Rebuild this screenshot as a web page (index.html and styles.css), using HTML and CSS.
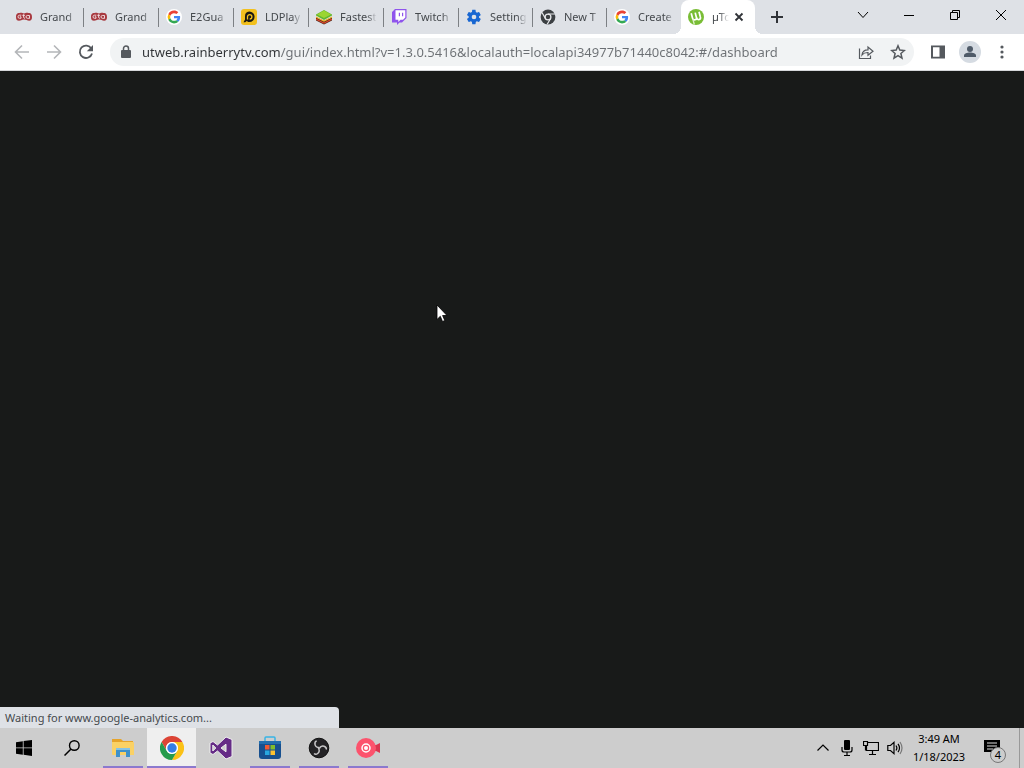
FILE: index.html
```html
<!DOCTYPE html>
<html lang="en">
<head>
<meta charset="utf-8">
<meta name="viewport" content="width=device-width, initial-scale=1">
<title>µTorrent Web</title>
<link rel="stylesheet" href="styles.css">
</head>
<body>
<svg class="defs" aria-hidden="true">
  <symbol id="pad" viewBox="0 0 16 16">
    <path fill="#a83a40" d="M3.500 4C6 3.500 6.500 4.500 8 4.500S10 3.500 12.500 4C15.500 4 16 6 16 8.200S15 12 13 11.800C11 11.600 10.500 10.500 8 10.500S5 11.800 3 11.800 0 10.500 0 8.200.5 4 3.500 4z"/>
    <path fill="none" stroke="#f3e4e8" stroke-width=".9" d="M5.300 6.200H3.500Q2 6.300 2 7.800T3.500 9.300H5V7.800H3.800M6.300 6.300H9M7.600 5.300V8.500Q7.700 9.300 9 9.200M13.500 9.500V6.500H11.300Q10 6.600 10 7.900T11.400 9.300H13.500"/>
  </symbol>
  <symbol id="google" viewBox="0 0 48 48">
    <circle cx="24" cy="24" r="24" fill="#fff"/>
    <g transform="translate(4.800 4.800) scale(.8)">
    <path fill="#ea4335" d="M24 9.500c3.540 0 6.710 1.220 9.210 3.600l6.850-6.850C35.900 2.380 30.470 0 24 0 14.620 0 6.510 5.380 2.560 13.220l7.980 6.190C12.430 13.720 17.740 9.500 24 9.500z"/>
    <path fill="#4285f4" d="M46.980 24.550c0-1.570-.15-3.090-.38-4.550H24v9.020h12.940c-.58 2.960-2.260 5.480-4.780 7.180l7.730 6c4.510-4.180 7.090-10.360 7.090-17.650z"/>
    <path fill="#fbbc05" d="M10.530 28.590a14.500 14.500 0 0 1 0-9.180l-7.980-6.190a24 24 0 0 0 0 21.560z"/>
    <path fill="#34a853" d="M24 48c6.480 0 11.930-2.130 15.890-5.810l-7.730-6c-2.150 1.450-4.920 2.300-8.160 2.300-6.260 0-11.570-4.220-13.470-9.910l-7.980 6.190C6.510 42.620 14.620 48 24 48z"/>
    </g>
  </symbol>
</svg>
<div class="window">
  <header class="tabstrip">
    <div class="tabs" role="tablist">
      <button class="tab" role="tab"><svg class="favicon"><use href="#pad"/></svg><span class="tab-title">Grand</span></button>
      <button class="tab" role="tab"><svg class="favicon"><use href="#pad"/></svg><span class="tab-title">Grand</span></button>
      <button class="tab" role="tab"><svg class="favicon"><use href="#google"/></svg><span class="tab-title">E2Gua</span></button>
      <button class="tab" role="tab"><svg class="favicon" viewBox="0 0 16 16"><rect width="16" height="16" rx="3" fill="#f2c01e"/><path fill="#191813" d="M8.300 2.500a5.300 5.300 0 0 1 0 10.600H7.200L5.800 12 4.200 13.300H2.500L4 10.500V7.500a4.800 4.800 0 0 1 4.300-5z"/><path fill="none" stroke="#f2c01e" stroke-width="1.300" d="M6.500 10.500V7.800A2.200 2.200 0 1 1 8.700 10"/></svg><span class="tab-title">LDPlay</span></button>
      <button class="tab" role="tab"><svg class="favicon" viewBox="0 0 16 16"><path fill="#4a291b" d="M0 8l8 4 8-4v3.500L8 15.500 0 11.500z"/><path fill="#e8482c" d="M0 9.500l8 4 8-4v1.200l-8 4-8-4z"/><path fill="#f7b428" d="M0 7.500l8 4 8-4v1.300l-8 4-8-4z"/><path fill="#62b62f" d="M0 5.500L8 1l8 4.500v1L8 11 0 6.500z"/><path fill="#9bd531" d="M1 5.500L8 1.500l7 4L8 9z"/></svg><span class="tab-title">Fastest</span></button>
      <button class="tab" role="tab"><svg class="favicon" viewBox="0 0 16 16"><path fill="#8f54ec" d="M4 0h11.500v9L11 13.500H8.500L6 16v-2.500H1V3z"/><path fill="#fff" d="M4.500 1.200h9.800v7.300L12 10.800H9.500L7.300 13v-2.200H4.500z"/><path fill="#8f54ec" d="M7.800 3.700H9v3.600H7.800zM11 3.700h1.200v3.600H11z"/></svg><span class="tab-title">Twitch</span></button>
      <button class="tab" role="tab"><svg class="favicon" viewBox="0 0 24 24"><path fill="#1967d2" d="M19.600 13a8 8 0 0 0 0-2l2.300-1.800c.2-.2.300-.5.100-.7l-2.200-3.800c-.1-.3-.4-.3-.7-.2l-2.700 1a8 8 0 0 0-1.700-1L14.300 1.600c0-.3-.3-.5-.5-.5H9.800c-.3 0-.5.200-.5.500l-.4 2.900a8 8 0 0 0-1.700 1l-2.700-1c-.3-.1-.6 0-.7.200L1.600 8.500c-.1.200-.1.500.1.700L4 11a8 8 0 0 0 0 2l-2.300 1.800c-.2.200-.2.500-.1.700l2.200 3.800c.1.300.4.300.7.200l2.700-1a8 8 0 0 0 1.700 1l.4 2.900c0 .3.200.5.500.5h4c.2 0 .5-.2.500-.5l.4-2.900a8 8 0 0 0 1.700-1l2.700 1c.3.100.6 0 .7-.2l2.200-3.800c.2-.2.100-.5-.1-.7zM12 15.500a3.500 3.500 0 1 1 0-7 3.500 3.500 0 0 1 0 7z"/></svg><span class="tab-title">Setting</span></button>
      <button class="tab" role="tab"><svg class="favicon" viewBox="0 0 16 16"><circle cx="8" cy="8" r="7.400" fill="#3c4043"/><circle cx="8" cy="8" r="2.900" fill="none" stroke="#e8eaed" stroke-width="1.300"/><path stroke="#e8eaed" stroke-width="1.200" d="M8 5h7M5.400 9.500L2 3.500M10.600 9.500L7.200 15.200"/></svg><span class="tab-title">New T</span></button>
      <button class="tab" role="tab"><svg class="favicon"><use href="#google"/></svg><span class="tab-title">Create</span></button>
      <div class="tab tab-active" role="tab" aria-selected="true"><svg class="favicon" viewBox="0 0 16 16"><circle cx="8" cy="8" r="8" fill="#79bd35"/><path fill="none" stroke="#fff" stroke-width="1.700" d="M3.200 4.300l1.200 4.500Q5 11.300 7 10.800T8.400 8.400L7.200 3.600M8.400 8.400q1 2.800 2.900 2.100Q13 9.800 12.300 7.700L11 2.800"/><path fill="none" stroke="#dcefc5" stroke-width="1.300" d="M5 10.500L6.300 15.500"/></svg><span class="tab-title">µTo</span><button class="tab-close" aria-label="Close tab"><svg class="icon10" viewBox="0 0 10 10"><path d="M1.500 1.500l7 7M8.500 1.500l-7 7" stroke="#303338" stroke-width="1.800"/></svg></button></div>
    </div>
    <div class="newtab-area"><button class="newtab" aria-label="New tab"><svg viewBox="0 0 14 14" class="icon14"><path d="M7 1v12M1 7h12" stroke="#303338" stroke-width="2"/></svg></button></div>
    <div class="controls">
      <button class="control" aria-label="Search tabs"><svg class="icon12" viewBox="0 0 12 12"><path d="M1 3l5 5.500L11 3"/></svg></button>
      <button class="control" aria-label="Minimize"><svg class="icon12" viewBox="0 0 12 12"><path d="M1 6.500h10"/></svg></button>
      <button class="control" aria-label="Restore"><svg class="icon12" viewBox="0 0 12 12"><path d="M1.500 3.500h7v7h-7zM3.500 3.500v-2h7v7h-2"/></svg></button>
      <button class="control" aria-label="Close"><svg class="icon12" viewBox="0 0 12 12"><path d="M1 1l10 10M11 1L1 11"/></svg></button>
    </div>
  </header>
  <div class="toolbar">
    <button class="tool" aria-label="Back"><svg class="icon16 dim" viewBox="0 0 16 16"><path d="M15 8H2M8 1.500L1.500 8 8 14.500"/></svg></button>
    <button class="tool" aria-label="Forward"><svg class="icon16 dim" viewBox="0 0 16 16"><path d="M1 8h13M8 1.500L14.500 8 8 14.500"/></svg></button>
    <button class="tool" aria-label="Reload"><svg class="icon16" viewBox="0 0 16 16"><path d="M13.300 4.500A6.200 6.200 0 1 0 14 9.500" fill="none" stroke="#55595e" stroke-width="1.800"/><path d="M15 1v6.200H8.800z" fill="#55595e"/></svg></button>
    <div class="omnibox">
      <svg class="lock" viewBox="0 0 10 14"><rect y="5" width="10" height="8" rx="1" fill="#55595e"/><path d="M2.500 5.500V3.500a2.500 2.500 0 0 1 5 0v2" fill="none" stroke="#55595e" stroke-width="1.500"/></svg>
      <input class="url" type="text" aria-label="Address" spellcheck="false" value="utweb.rainberrytv.com/gui/index.html?v=1.3.0.5416&amp;localauth=localapi34977b71440c8042:#/dashboard">
      <button class="tool" aria-label="Share"><svg class="icon16 line" viewBox="0 0 16 16"><path d="M1.500 4.500v10h11v-3M4 11c.3-3.500 2.500-5.200 6-5.200V3L15 7.200l-5 4V8.500C7.500 8.400 5.500 9 4 11z"/></svg></button>
      <button class="tool" aria-label="Bookmark"><svg class="icon16 line" viewBox="0 0 16 16"><path stroke-width="1.500" d="M8 1.800l1.800 4.300 4.600.4-3.500 3 1.100 4.600L8 11.700l-4 2.400 1.100-4.600-3.500-3 4.600-.4z"/></svg></button>
    </div>
    <div class="toolbar-end">
      <button class="tool" aria-label="Side panel"><svg class="icon16" viewBox="0 0 16 16"><path fill="#55595e" fill-rule="evenodd" d="M1 1.500h14v13H1zM3 3.300v9.400h6.500V3.300z"/></svg></button>
      <button class="tool" aria-label="Profile"><svg class="avatar" viewBox="0 0 22 22"><circle cx="11" cy="11" r="11" fill="#d5dbe2"/><circle cx="11" cy="8" r="3" fill="#4f5b69"/><path d="M5 16v-1.500c0-2 3-3 6-3s6 1 6 3V16z" fill="#4f5b69"/></svg></button>
      <button class="tool" aria-label="Menu"><svg class="icon16" viewBox="0 0 16 16" fill="#55595e"><circle cx="8" cy="3" r="1.600"/><circle cx="8" cy="8" r="1.600"/><circle cx="8" cy="13" r="1.600"/></svg></button>
    </div>
  </div>
  <main class="page">
    <svg class="cursor" viewBox="0 0 12 19" aria-hidden="true"><path d="M1 1v14.500l3.300-3.200 2.200 5.200 2.300-1-2.200-5H11z" fill="#fff" stroke="#000" stroke-width=".8"/></svg>
    <div class="status" role="status">Waiting for www.google-analytics.com...</div>
  </main>
  <footer class="taskbar">
    <div class="system">
      <button class="task" aria-label="Start"><svg class="icon16" viewBox="0 0 16 16"><path d="M0 2.200l6.800-1v6.300H0zM7.600 1.100L16 0v7.500H7.600zM0 8.300h6.800v6.400L0 13.800zM7.600 8.300H16V16l-8.400-1.200z"/></svg></button>
      <button class="task" aria-label="Search"><svg class="icon16" viewBox="0 0 16 16"><circle cx="10.300" cy="5.500" r="4.800" fill="none" stroke="#000" stroke-width="1.400"/><path d="M6.800 9.200L.5 15.500" stroke="#000" stroke-width="1.500"/></svg></button>
    </div>
    <div class="apps">
      <button class="app running" aria-label="File Explorer"><svg class="icon24" viewBox="0 0 24 24"><path fill="#e6a42b" d="M1 3h9l2 2h10v4H1z"/><path fill="#fad165" d="M1 6h21q1 0 1 1v12H2q-1 0-1-1z"/><path fill="#3f91c9" d="M5 12h14v9h-4v-5H9v5H5z"/><path fill="#86c3e5" d="M5 12h14v2H5z"/></svg></button>
      <button class="app running current" aria-label="Google Chrome"><svg class="icon24" viewBox="0 0 24 24"><path fill="#dc4435" d="M1.600 6A12 12 0 0 1 22.400 6H12a6 6 0 0 0-5.200 9z"/><path fill="#fbc116" d="M22.400 6A12 12 0 0 1 12 24l5.200-9A6 6 0 0 0 12 6z"/><path fill="#259b4c" d="M12 24A12 12 0 0 1 1.600 6l5.200 9a6 6 0 0 0 10.400 0z"/><circle cx="12" cy="12" r="6" fill="#fff"/><circle cx="12" cy="12" r="4.700" fill="#347de5"/></svg></button>
      <button class="app" aria-label="Visual Studio"><svg class="icon24" viewBox="0 0 24 24"><path fill="#652b86" stroke="#eee" stroke-width="1" fill-rule="evenodd" d="M17 1l6 2.500v17L17 23l-8.500-8L4 18.500 1 17V7l3-1.500L8.500 9zM3.800 9v6l3-3zm13.200-.8L12 12l5 3.800z"/></svg></button>
      <button class="app running" aria-label="Microsoft Store"><svg class="icon24" viewBox="0 0 24 24"><path d="M7 6V2q0-1 1-1h8q1 0 1 1v4" fill="none" stroke="#38b4e5" stroke-width="1.500"/><path fill="#17508f" d="M1 5h22v15q0 3-3 3H4q-3 0-3-3z"/><path fill="#236fae" d="M1 5h22v3H1z"/><path fill="#f05a32" d="M7 9h4.500v4.500H7z"/><path fill="#82bd2c" d="M12.500 9H17v4.500h-4.500z"/><path fill="#28a7df" d="M7 14.500h4.500V19H7z"/><path fill="#fbc131" d="M12.500 14.500H17V19h-4.500z"/></svg></button>
      <button class="app running" aria-label="OBS Studio"><svg class="icon24" viewBox="0 0 24 24"><circle cx="12" cy="12" r="9.800" fill="#242326" stroke="#111" stroke-width="1"/><g fill="none" stroke="#c7c6c8" stroke-width="1.500"><path id="blade" d="M12.500 11.500Q8.500 11.500 8 8.500T9.700 5"/><use href="#blade" transform="rotate(120 12 12)"/><use href="#blade" transform="rotate(240 12 12)"/></g></svg></button>
      <button class="app running" aria-label="Screen recorder"><svg class="icon24" viewBox="0 0 24 24"><path fill="#d9364f" d="M16 9h4l4-2v10l-4-2h-4z"/><circle cx="10" cy="12" r="10" fill="#fc536d"/><circle cx="10" cy="12" r="4" fill="none" stroke="#fff" stroke-width="1.500"/><circle cx="10" cy="12" r="2" fill="#fff"/></svg></button>
    </div>
    <div class="tray">
      <button class="tray-icon" aria-label="Show hidden icons"><svg class="icon16 thin" viewBox="0 0 16 16"><path d="M2.500 10.500L8 5l5.500 5.500"/></svg></button>
      <button class="tray-icon" aria-label="Microphone"><svg class="icon16 thin" viewBox="0 0 16 16"><rect x="5" y="0" width="6" height="10" rx="1" fill="#000" stroke="none"/><path d="M3 7v3q0 2 2 2h6q2 0 2-2V7M8 12v3M5 15.500h6"/></svg></button>
      <button class="tray-icon" aria-label="Network"><svg class="icon16 thin" viewBox="0 0 16 16"><path d="M5 2.500h10.500v8H3.500V6M.5 1.500h4v4h-4zM9.500 10.500v4M6 14.500h7M2.500 5.500v5"/></svg></button>
      <button class="tray-icon" aria-label="Volume"><svg class="icon16 thin" viewBox="0 0 16 16"><path d="M.8 5.500h2.700L7 2.300v11.400L3.500 10.500H.8zM9 5.500q1.800 2.500 0 5M11 3.800q3 4.200 0 8.400"/><path stroke="#777" d="M13 2q4 6 0 12"/></svg></button>
      <button class="clock"><span>3:49 AM</span><span>1/18/2023</span></button>
      <button class="notices" aria-label="Notifications, 4 new"><svg class="notice-icon" viewBox="0 0 18 18"><path d="M0 1h16v12h-5l-4 4v-4H0z"/><path d="M3 4h10M3 7h10M3 10h6" stroke="#ddd" stroke-width="1.200"/></svg><span class="badge">4</span></button>
      <button class="desktop" aria-label="Show desktop"></button>
    </div>
  </footer>
</div>
</body>
</html>
```
FILE: styles.css
```css
* { box-sizing: border-box; }
body { margin: 0; font-family: "Noto Sans", "Open Sans", sans-serif; font-size: 11px; color: #45494d; }
button { display: flex; align-items: center; justify-content: center; padding: 0; border: 0; background: transparent; font: inherit; color: inherit; }
svg { display: block; flex: none; }
.defs { display: none; }
.window { display: flex; flex-direction: column; height: 100vh; overflow: hidden; }

.tabstrip { display: flex; flex: none; height: 34px; background: #dee1e6; }
.tabs { display: flex; flex: 1; min-width: 0; padding-left: 8px; }
.tab { display: flex; flex: 1 1 0; min-width: 0; align-items: center; justify-content: flex-start; gap: 8px; padding: 0 2px 0 8px; position: relative; font-size: 11px; line-height: 16px; }
.tab:nth-child(n+8) { flex: 0 1 74px; padding-left: 7px; }
.tab:not(.tab-active)::after { content: ""; position: absolute; right: 0; top: 8px; bottom: 7px; width: 1px; background: #7d8084; }
.tab:nth-child(-n+6)::after { right: -1px; }
.tab:nth-last-child(2)::after { display: none; }
.favicon { width: 16px; height: 16px; }
.tab-title { flex: 1; min-width: 0; overflow: hidden; white-space: nowrap; text-align: left; mask-image: linear-gradient(to left, transparent 4px, #000 14px); }
.tab-active { background: #fff; border-radius: 8px 8px 0 0; }
.tab.tab-active { padding: 0 10px 0 7px; }
.tab-active .tab-title { margin-right: -8px; }
.tab-active::before, .tab-active::after { content: ""; position: absolute; bottom: 0; width: 8px; height: 8px; }
.tab-active::before { right: 100%; background: radial-gradient(circle at 0 0, transparent 8px, #fff 8px); }
.tab-active::after { left: 100%; background: radial-gradient(circle at 100% 0, transparent 8px, #fff 8px); }
.tab-close { flex: none; width: 12px; height: 16px; }
.newtab-area { display: flex; flex: none; width: 85px; padding-left: 8px; }
.newtab { width: 28px; }
.controls { display: flex; flex: none; height: 29px; }
.control { width: 46px; }
.control svg { fill: none; stroke: #000; stroke-width: 1; }

.toolbar { display: flex; flex: none; align-items: center; height: 37px; padding: 0 6px; background: #fff; border-bottom: 1px solid #d5d7da; }
.tool { flex: none; width: 32px; height: 28px; }
.dim { fill: none; stroke: #b4b6b9; stroke-width: 1.6; }
.line { fill: none; stroke: #55595e; stroke-width: 1.2; }
.omnibox { display: flex; flex: 1; min-width: 0; align-items: center; height: 28px; margin-left: 8px; padding: 0 0 0 11px; border-radius: 14px; background: #f1f3f4; }
.lock { width: 10px; height: 14px; margin-right: 11px; }
.url { flex: 1; min-width: 0; height: 28px; padding: 0; border: 0; outline: 0; font: 13px/20px "Noto Sans", sans-serif; color: #6c7074; background: linear-gradient(to right, #303336 139px, #6c7074 139px); background-clip: text; -webkit-background-clip: text; -webkit-text-fill-color: transparent; }
.toolbar-end { display: flex; flex: none; padding-left: 8px; }
.avatar { width: 22px; height: 22px; }
.icon10 { width: 10px; height: 10px; }
.icon12 { width: 12px; height: 12px; }
.icon14 { width: 14px; height: 14px; }
.icon16 { width: 16px; height: 16px; }
.icon24 { width: 24px; height: 24px; }

.page { display: flex; flex: 1; min-height: 0; align-items: flex-end; position: relative; background: #181a19; }
.cursor { position: absolute; left: 436px; top: 233px; width: 12px; height: 19px; }
.status { width: 33%; min-width: 339px; height: 21px; padding: 0 5px; border-radius: 0 4px 0 0; background: #dee1e6; line-height: 21px; white-space: nowrap; }

.taskbar { display: flex; flex: none; height: 40px; background: #cdcdcd; }
.system, .apps { display: flex; }
.task { width: 48px; }
.apps { margin-left: 2px; }
.app { width: 49px; position: relative; }
.running::after { content: ""; position: absolute; left: 5px; right: 4px; bottom: 0; height: 2px; background: #8b79ce; }
.current { background: #efefef; }
.current::after { left: 0; right: 0; }
.tray { display: flex; margin-left: auto; color: #000; }
.tray-icon { width: 24px; }
.thin { fill: none; stroke: #000; stroke-width: 1.2; }
.clock { flex-direction: column; width: 64px; line-height: 18px; white-space: nowrap; }
.notices { width: 48px; position: relative; }
.notice-icon { width: 18px; height: 18px; margin-right: 4px; }
.badge { position: absolute; left: 19px; top: 19px; width: 16px; height: 16px; border: 1px solid #777; border-radius: 8px; background: #cdcdcd; line-height: 14px; text-align: center; }
.desktop { width: 5px; border-left: 1px solid #999; }
```
